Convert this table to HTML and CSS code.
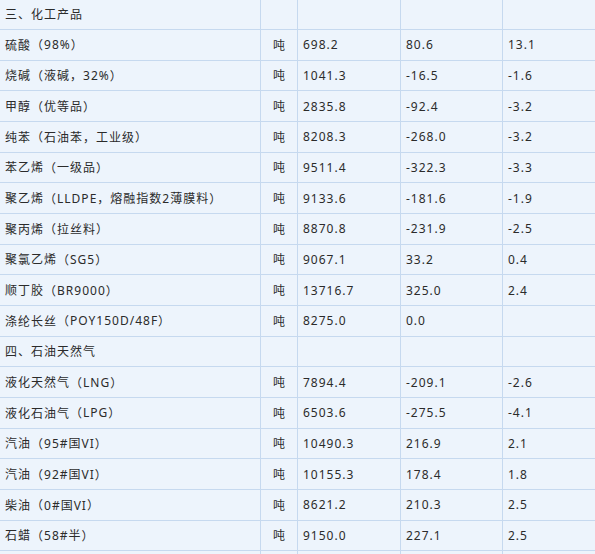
FILE: index.html
```html
<!DOCTYPE html>
<html lang="zh-CN">
<head>
<meta charset="utf-8">
<title>价格表</title>
<link rel="stylesheet" href="styles.css">
</head>
<body>
<div class="sheet">
  <div class="row"><div class="c name">三、化工产品</div><div class="c unit"></div><div class="c num"></div><div class="c num"></div><div class="c num last"></div></div>
  <div class="row"><div class="c name">硫酸<span class="p">（</span>98%<span class="p">）</span></div><div class="c unit">吨</div><div class="c num">698.2</div><div class="c num">80.6</div><div class="c num last">13.1</div></div>
  <div class="row"><div class="c name">烧碱<span class="p">（</span>液碱，32%<span class="p">）</span></div><div class="c unit">吨</div><div class="c num">1041.3</div><div class="c num">-16.5</div><div class="c num last">-1.6</div></div>
  <div class="row"><div class="c name">甲醇<span class="p">（</span>优等品<span class="p">）</span></div><div class="c unit">吨</div><div class="c num">2835.8</div><div class="c num">-92.4</div><div class="c num last">-3.2</div></div>
  <div class="row"><div class="c name">纯苯<span class="p">（</span>石油苯，工业级<span class="p">）</span></div><div class="c unit">吨</div><div class="c num">8208.3</div><div class="c num">-268.0</div><div class="c num last">-3.2</div></div>
  <div class="row"><div class="c name">苯乙烯<span class="p">（</span>一级品<span class="p">）</span></div><div class="c unit">吨</div><div class="c num">9511.4</div><div class="c num">-322.3</div><div class="c num last">-3.3</div></div>
  <div class="row"><div class="c name">聚乙烯<span class="p">（</span>LLDPE，熔融指数2薄膜料<span class="p">）</span></div><div class="c unit">吨</div><div class="c num">9133.6</div><div class="c num">-181.6</div><div class="c num last">-1.9</div></div>
  <div class="row"><div class="c name">聚丙烯<span class="p">（</span>拉丝料<span class="p">）</span></div><div class="c unit">吨</div><div class="c num">8870.8</div><div class="c num">-231.9</div><div class="c num last">-2.5</div></div>
  <div class="row"><div class="c name">聚氯乙烯<span class="p">（</span>SG5<span class="p">）</span></div><div class="c unit">吨</div><div class="c num">9067.1</div><div class="c num">33.2</div><div class="c num last">0.4</div></div>
  <div class="row"><div class="c name">顺丁胶<span class="p">（</span>BR9000<span class="p">）</span></div><div class="c unit">吨</div><div class="c num">13716.7</div><div class="c num">325.0</div><div class="c num last">2.4</div></div>
  <div class="row"><div class="c name">涤纶长丝<span class="p">（</span>POY150D/48F<span class="p">）</span></div><div class="c unit">吨</div><div class="c num">8275.0</div><div class="c num">0.0</div><div class="c num last"></div></div>
  <div class="row"><div class="c name">四、石油天然气</div><div class="c unit"></div><div class="c num"></div><div class="c num"></div><div class="c num last"></div></div>
  <div class="row"><div class="c name">液化天然气<span class="p">（</span>LNG<span class="p">）</span></div><div class="c unit">吨</div><div class="c num">7894.4</div><div class="c num">-209.1</div><div class="c num last">-2.6</div></div>
  <div class="row"><div class="c name">液化石油气<span class="p">（</span>LPG<span class="p">）</span></div><div class="c unit">吨</div><div class="c num">6503.6</div><div class="c num">-275.5</div><div class="c num last">-4.1</div></div>
  <div class="row"><div class="c name">汽油<span class="p">（</span>95#国VI<span class="p">）</span></div><div class="c unit">吨</div><div class="c num">10490.3</div><div class="c num">216.9</div><div class="c num last">2.1</div></div>
  <div class="row"><div class="c name">汽油<span class="p">（</span>92#国VI<span class="p">）</span></div><div class="c unit">吨</div><div class="c num">10155.3</div><div class="c num">178.4</div><div class="c num last">1.8</div></div>
  <div class="row"><div class="c name">柴油<span class="p">（</span>0#国VI<span class="p">）</span></div><div class="c unit">吨</div><div class="c num">8621.2</div><div class="c num">210.3</div><div class="c num last">2.5</div></div>
  <div class="row"><div class="c name">石蜡<span class="p">（</span>58#半<span class="p">）</span></div><div class="c unit">吨</div><div class="c num">9150.0</div><div class="c num">227.1</div><div class="c num last">2.5</div></div>
  <div class="row"><div class="c name"></div><div class="c unit"></div><div class="c num"></div><div class="c num"></div><div class="c num last"></div></div>
</div>
</body>
</html>
```

FILE: styles.css
```css
html, body {
  margin: 0;
  padding: 0;
  background: #edf4fc;
  overflow: hidden;
}

.sheet {
  width: 595px;
  margin-top: -0.67px;
  font-family: "Noto Sans", "Noto Sans CJK SC", sans-serif;
  font-size: 12px;
  letter-spacing: 1px;
  color: #2b2b2b;
}

.row {
  display: grid;
  grid-template-columns: 261px 37px 103px 102px 1fr;
  height: 30.667px;
  box-sizing: border-box;
  border-bottom: 1px solid #c6d9ef;
}

.c {
  display: flex;
  align-items: center;
  border-right: 1px solid #c6d9ef;
  white-space: nowrap;
  overflow: hidden;
}

.c.last {
  border-right: none;
}

.name {
  padding-left: 5px;
}

.p {
  font-family: "Noto Sans CJK TC", "Noto Sans CJK SC", sans-serif;
}

.unit {
  justify-content: center;
  padding-left: 1px;
}

.num {
  padding-left: 5px;
}
```
